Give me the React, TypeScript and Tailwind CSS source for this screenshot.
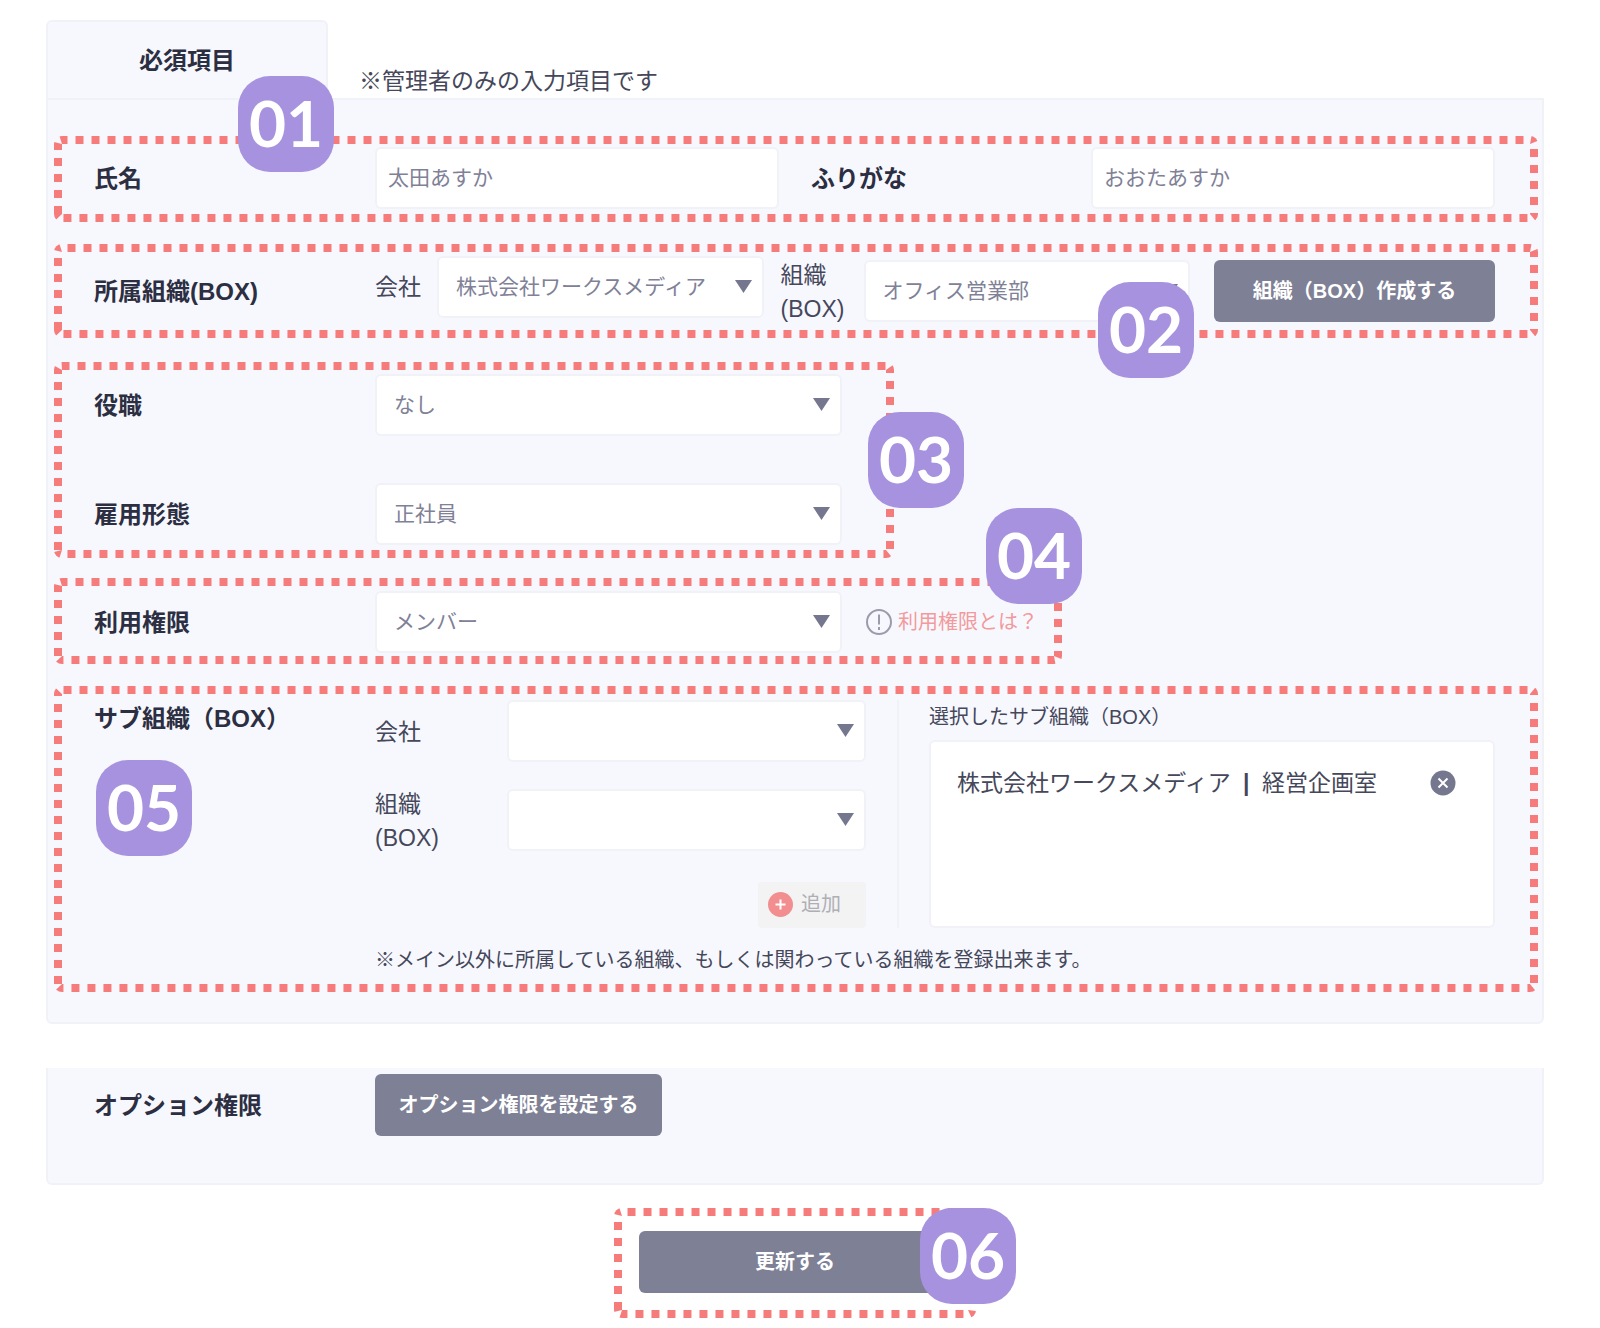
import { useId, useLayoutEffect, useRef, useState } from "react";
import type { ReactNode } from "react";

const RADIUS = 8;

/** Dashed frame that traces the edge of its positioned parent. */
function DashedFrame() {
  const ref = useRef<SVGSVGElement>(null);
  const clipId = useId();
  const [size, setSize] = useState({ w: 0, h: 0 });

  useLayoutEffect(() => {
    const parent = ref.current?.parentElement;
    if (!parent) return;
    const measure = () => setSize({ w: parent.offsetWidth, h: parent.offsetHeight });
    measure();
    const observer = new ResizeObserver(measure);
    observer.observe(parent);
    return () => observer.disconnect();
  }, []);

  const { w, h } = size;
  const r = RADIUS;
  const d = `M0 ${h - r}V${r}A${r} ${r} 0 0 1 ${r} 0H${w - r}A${r} ${r} 0 0 1 ${w} ${r}V${h - r}A${r} ${r} 0 0 1 ${w - r} ${h}H${r}A${r} ${r} 0 0 1 0 ${h - r}Z`;

  return (
    <svg ref={ref} aria-hidden="true" className="pointer-events-none absolute inset-0 size-full">
      {w > 0 && (
        <>
          <clipPath id={clipId}>
            <path d={d} />
          </clipPath>
          <path d={d} clipPath={`url(#${clipId})`} fill="none" stroke="#f67c7b" strokeWidth="16" strokeDasharray="8 8" />
        </>
      )}
    </svg>
  );
}

function Badge({ className, children }: { className: string; children: ReactNode }) {
  return (
    <span
      className={`absolute z-10 flex size-24 items-center justify-center rounded-[32px] bg-[#a792df] pb-0.5 font-['Lato',sans-serif] text-[64px] leading-none font-bold text-white ${className}`}
    >
      {children}
    </span>
  );
}

function Step({ className, children }: { className: string; children: ReactNode }) {
  return (
    <section className={`relative pl-10 ${className}`}>
      {children}
      <DashedFrame />
    </section>
  );
}

function Select({ id, value, className }: { id: string; value: string; className: string }) {
  return (
    <div className={`relative ${className}`}>
      <select
        id={id}
        defaultValue={value}
        className="h-[62px] w-full appearance-none rounded-md border-2 border-[#f1f2f8] bg-white pr-10 pl-[17px] text-[21px] text-[#7f8197]"
      >
        <option value={value}>{value}</option>
      </select>
      <svg aria-hidden="true" viewBox="0 0 17 13" className="pointer-events-none absolute top-6 right-3 h-[13px] w-[17px]">
        <path d="M0 0H17L8.500 13Z" fill="#74778e" />
      </svg>
    </div>
  );
}

function TextField({ id, value }: { id: string; value: string }) {
  return (
    <input
      id={id}
      type="text"
      defaultValue={value}
      className="h-[62px] min-w-0 flex-1 rounded-md border-2 border-[#f1f2f8] bg-white px-[11px] pb-1 text-[21px] text-[#7f8197]"
    />
  );
}

const heading = "shrink-0 pt-0.5 text-[24px] font-bold text-[#2c2e42]";
const button = "h-[62px] rounded-md bg-[#7e8095] text-[20px] font-bold text-white";

export default function App() {
  return (
    <main
      lang="ja"
      className="bg-white pt-5 pr-14 pb-2.5 pl-[46px] font-['Liberation_Sans','Noto_Sans_CJK_JP',sans-serif] text-[23px] leading-[34px] text-[#45475a]"
    >
      <form onSubmit={(event) => event.preventDefault()}>
        <header className="flex items-end">
          <h1 className="flex h-[78px] w-[282px] items-center justify-center rounded-t-md border-2 border-b-0 border-[#f1f2f8] bg-[#f7f8fe] pt-0.5 text-[24px] font-bold text-[#2c2e42]">
            必須項目
          </h1>
          <p className="pl-[31px]">※管理者のみの入力項目です</p>
        </header>

        <div className="rounded-b-md border-2 border-[#f1f2f8] bg-[#f7f8fe] pt-9 pr-1 pb-[30px] pl-1.5">
          <Step className="mb-[22px] flex items-center pt-[11px] pr-[43px] pb-[13px]">
            <label htmlFor="name" className={`${heading} w-[281px]`}>氏名</label>
            <TextField id="name" value="太田あすか" />
            <label htmlFor="kana" className={`${heading} ml-8 w-[280px]`}>ふりがな</label>
            <TextField id="kana" value="おおたあすか" />
            <Badge className="-top-[60px] left-[184px]">01</Badge>
          </Step>

          <Step className="mb-6 flex items-center pt-3 pr-[43px] pb-3">
            <h2 className={`${heading} w-[281px]`}>所属組織(BOX)</h2>
            <label htmlFor="company" className="w-[62px] shrink-0 self-start leading-[62px]">会社</label>
            <Select id="company" value="株式会社ワークスメディア" className="flex-1 self-start" />
            <label htmlFor="division" className="ml-[17px] w-[83px] shrink-0 pt-0.5">
              組織<br />(BOX)
            </label>
            <Select id="division" value="オフィス営業部" className="flex-1" />
            <button type="button" className={`${button} ml-6 w-[281px] shrink-0`}>組織（BOX）作成する</button>
            <Badge className="top-[38px] right-[344px]">02</Badge>
          </Step>

          <Step className="mb-5 flex w-fit flex-col gap-[47px] pt-3 pr-[52px] pb-[13px]">
            <div className="flex items-center">
              <label htmlFor="position" className={`${heading} w-[281px]`}>役職</label>
              <Select id="position" value="なし" className="w-[467px]" />
            </div>
            <div className="flex items-center">
              <label htmlFor="employment" className={`${heading} w-[281px]`}>雇用形態</label>
              <Select id="employment" value="正社員" className="w-[467px]" />
            </div>
            <Badge className="top-[50px] -right-[70px]">03</Badge>
          </Step>

          <Step className="mb-[22px] flex w-fit items-center pt-[13px] pr-6 pb-[11px]">
            <label htmlFor="role" className={`${heading} w-[281px]`}>利用権限</label>
            <Select id="role" value="メンバー" className="w-[467px]" />
            <a href="#role" className="ml-6 flex items-center gap-[6px] text-[20px] text-[#f29a9c]">
              <svg aria-hidden="true" viewBox="0 0 26 26" className="size-[26px]" fill="none" stroke="#9a9cab" strokeWidth="2">
                <circle cx="13" cy="13" r="12" />
                <path d="M13 5.500V15.500M13 18V21" />
              </svg>
              利用権限とは？
            </a>
            <Badge className="-top-[70px] -right-5">04</Badge>
          </Step>

          <Step className="pt-[14px] pr-[43px] pb-[15px]">
            <div className="flex">
              <h2 className={`${heading} w-[281px]`}>サブ組織（BOX）</h2>
              <div className="w-[491px] shrink-0">
                <div className="flex items-center">
                  <label htmlFor="sub-company" className="w-[132px] pt-0.5">会社</label>
                  <Select id="sub-company" value="" className="flex-1" />
                </div>
                <div className="mt-[23px] flex items-center">
                  <label htmlFor="sub-division" className="w-[132px] pt-0.5">
                    組織<br />(BOX)
                  </label>
                  <Select id="sub-division" value="" className="flex-1" />
                </div>
                <button
                  type="button"
                  className="mt-[27px] ml-auto flex h-[46px] w-[108px] items-center gap-2 rounded-sm bg-[#f3f3f3] pb-0.5 pl-2.5 text-[20px] text-[#aeafb5]"
                >
                  <svg aria-hidden="true" viewBox="0 0 25 25" className="size-[25px]">
                    <circle cx="12.500" cy="12.500" r="12.500" fill="#f28e90" />
                    <path d="M12.500 7.500V17.500M7.500 12.500H17.500" stroke="#fff" strokeWidth="2" />
                  </svg>
                  追加
                </button>
              </div>
              <div className="ml-[31px] flex flex-1 flex-col border-l-2 border-[#f1f2f8] pl-[30px]">
                <h3 className="mb-1.5 text-[20px]">選択したサブ組織（BOX）</h3>
                <ul className="flex-1 rounded-md border-2 border-[#f1f2f8] bg-white pt-6 pr-[37px] pl-[26px]">
                  <li className="flex items-center justify-between">
                    <span>
                      株式会社ワークスメディア<span className="px-[6px] font-bold"> | </span>経営企画室
                    </span>
                    <button type="button" aria-label="削除">
                      <svg aria-hidden="true" viewBox="0 0 26 26" className="size-[26px]">
                        <circle cx="13" cy="13" r="12.500" fill="#74778e" />
                        <path d="M8.500 8.500L17.500 17.500M17.500 8.500L8.500 17.500" stroke="#fff" strokeWidth="2" />
                      </svg>
                    </button>
                  </li>
                </ul>
              </div>
            </div>
            <p className="ml-[281px] pt-[15px] text-[20px]">
              ※メイン以外に所属している組織、もしくは関わっている組織を登録出来ます。
            </p>
            <Badge className="top-[74px] left-[42px]">05</Badge>
          </Step>
        </div>

        <div className="mt-11 flex items-center rounded-b-md border-2 border-t-0 border-[#f1f2f8] bg-[#f7f8fe] pt-1.5 pb-[47px] pl-[46px]">
          <h2 className={`${heading} w-[281px]`}>オプション権限</h2>
          <button type="button" className={`${button} w-[287px]`}>オプション権限を設定する</button>
        </div>

        <div className="relative mx-auto mt-[23px] w-[362px] px-[25px] pt-[23px] pb-[25px]">
          <button type="submit" className={`${button} w-full`}>更新する</button>
          <DashedFrame />
          <Badge className="top-0 -right-10">06</Badge>
        </div>
      </form>
    </main>
  );
}
